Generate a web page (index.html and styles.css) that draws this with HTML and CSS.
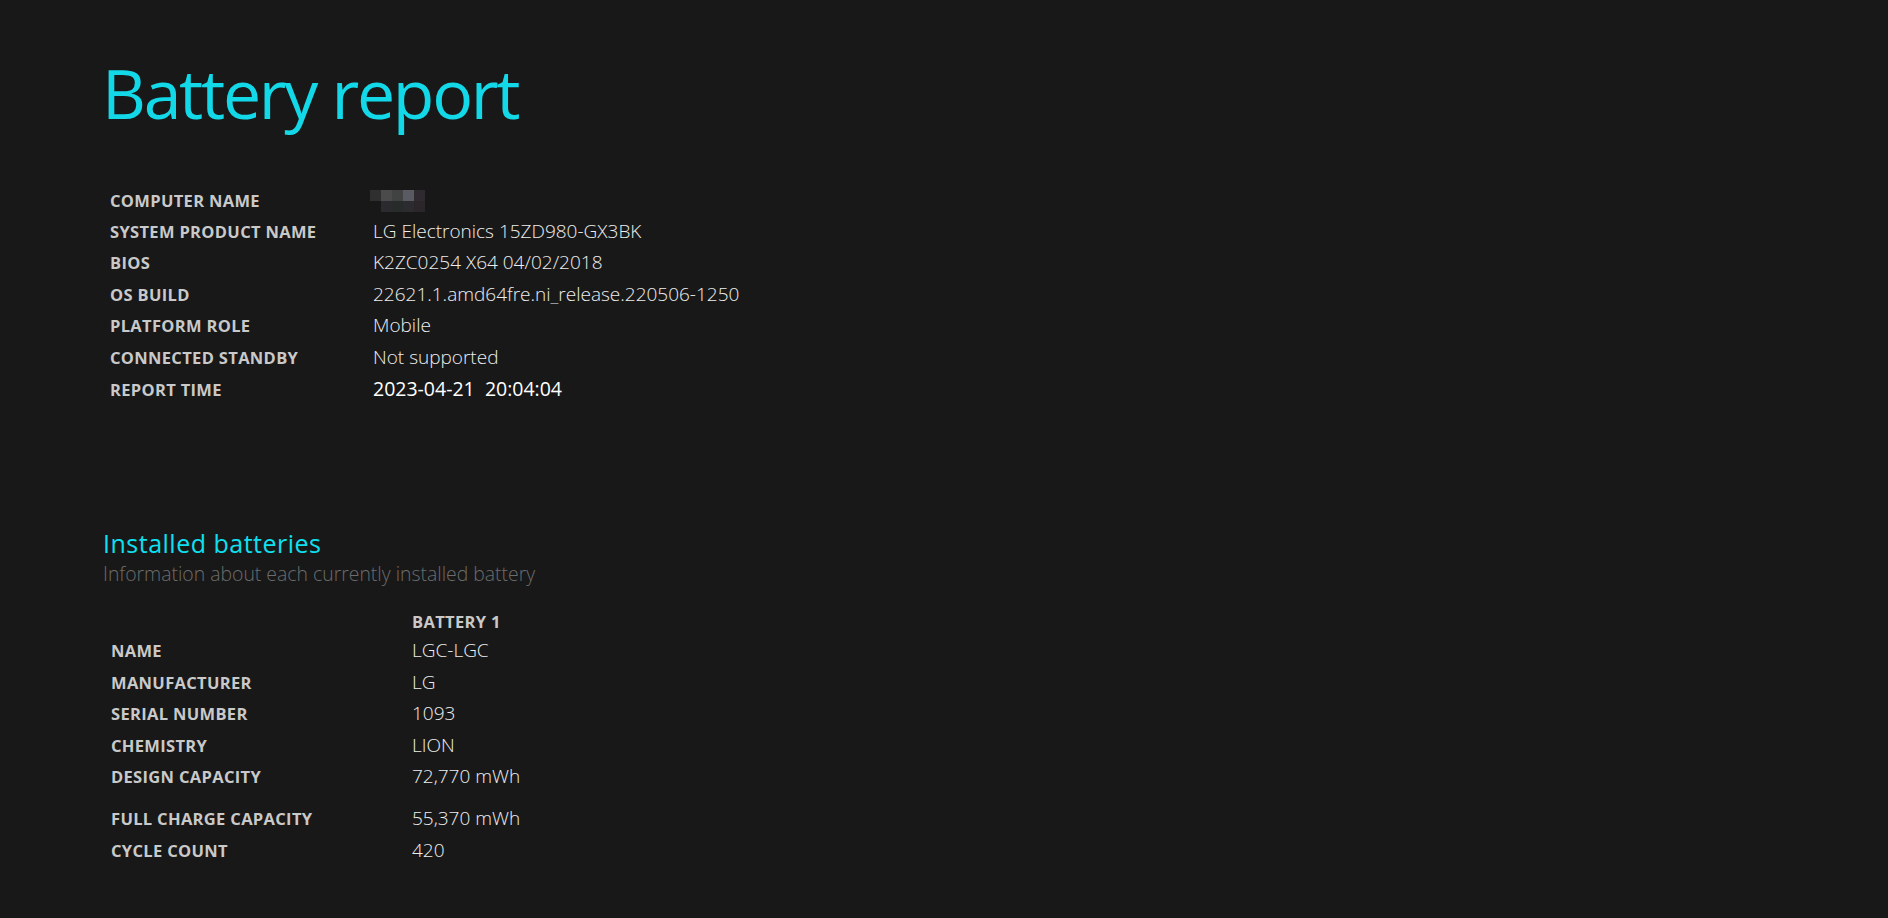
FILE: index.html
```html
<!DOCTYPE html>
<html lang="en">
<head>
<meta charset="utf-8">
<title>Battery report</title>
<link rel="stylesheet" href="styles.css">
</head>
<body>
<main class="page">
  <h1 class="title">Battery report</h1>

  <table class="info">
    <tr><td class="label">Computer name</td><td class="value"><span class="mosaic"><span class="mosaic-grid"><i></i><i></i><i></i><i></i><i></i><i></i><i></i><i></i><i></i><i></i></span></span></td></tr>
    <tr><td class="label">System product name</td><td class="value">LG Electronics 15ZD980-GX3BK</td></tr>
    <tr><td class="label">BIOS</td><td class="value">K2ZC0254 X64 04/02/2018</td></tr>
    <tr><td class="label">OS build</td><td class="value">22621.1.amd64fre.ni_release.220506-1250</td></tr>
    <tr><td class="label">Platform role</td><td class="value">Mobile</td></tr>
    <tr><td class="label">Connected standby</td><td class="value">Not supported</td></tr>
    <tr><td class="label">Report time</td><td class="value strong">2023-04-21&nbsp; 20:04:04</td></tr>
  </table>

  <h2 class="section-title">Installed batteries</h2>
  <p class="section-desc">Information about each currently installed battery</p>

  <table class="batteries">
    <tr class="head-row"><td class="label"></td><td class="label">Battery 1</td></tr>
    <tr><td class="label">Name</td><td class="value">LGC-LGC</td></tr>
    <tr><td class="label">Manufacturer</td><td class="value">LG</td></tr>
    <tr><td class="label">Serial number</td><td class="value">1093</td></tr>
    <tr><td class="label">Chemistry</td><td class="value">LION</td></tr>
    <tr class="tall"><td class="label">Design capacity</td><td class="value">72,770 mWh</td></tr>
    <tr><td class="label">Full charge capacity</td><td class="value">55,370 mWh</td></tr>
    <tr><td class="label">Cycle count</td><td class="value">420</td></tr>
  </table>
</main>
</body>
</html>
```

FILE: styles.css
```css
html, body {
  margin: 0;
  padding: 0;
  background: #181818;
}

body {
  font-family: "Open Sans", "Noto Sans", sans-serif;
  color: #f0f0f0;
  min-height: 918px;
}

.page {
  padding: 59px 0 0 100px;
}

.title {
  margin: 0 0 0 2px;
  font-size: 68px;
  line-height: 68px;
  font-weight: 400;
  letter-spacing: -2.3px;
  color: #12d8e8;
}

table {
  border-collapse: collapse;
  border-spacing: 0;
}

td {
  padding: 0;
  height: 31.5px;
  line-height: 1;
  vertical-align: baseline;
  white-space: nowrap;
}

.info {
  margin: 63px 0 0 10px;
}

.info .label {
  width: 263px;
}

.label {
  font-size: 16.5px;
  font-weight: 700;
  text-transform: uppercase;
  color: #c9c9c9;
  letter-spacing: 0.02em;
}

.value {
  font-size: 19px;
  font-weight: 300;
  color: #eeeeee;
}

.value.strong {
  font-weight: 400;
  font-size: 19.5px;
  color: #ffffff;
}

.mosaic {
  display: inline-block;
  overflow: hidden;
  margin-left: -3px;
  vertical-align: -5px;
}

.mosaic-grid {
  display: grid;
  grid-template-columns: repeat(5, 11px);
  grid-template-rows: repeat(2, 11px);
}

.mosaic i:nth-child(1) { background: #2f2f2f; }
.mosaic i:nth-child(2) { background: #4b4b4b; }
.mosaic i:nth-child(3) { background: #404342; }
.mosaic i:nth-child(4) { background: #5a5a62; }
.mosaic i:nth-child(5) { background: #2f2a2f; }
.mosaic i:nth-child(6) { background: #181818; }
.mosaic i:nth-child(7) { background: #2b2a2e; }
.mosaic i:nth-child(8) { background: #272b29; }
.mosaic i:nth-child(9) { background: #2c2c30; }
.mosaic i:nth-child(10) { background: #2a262a; }

.section-title {
  margin: 117px 0 0 3px;
  font-size: 25px;
  line-height: 30px;
  font-weight: 400;
  color: #0ee0f0;
  letter-spacing: 0.02em;
}

.section-desc {
  margin: 4px 0 0 3px;
  font-size: 19.4px;
  line-height: 24px;
  font-weight: 300;
  color: #6c6c6c;
}

.batteries {
  margin: 28px 0 0 11px;
}

.batteries td:first-child {
  width: 301px;
}

.batteries .head-row td {
  height: 27.5px;
}

.batteries .tall td {
  padding-bottom: 10.5px;
}
```
